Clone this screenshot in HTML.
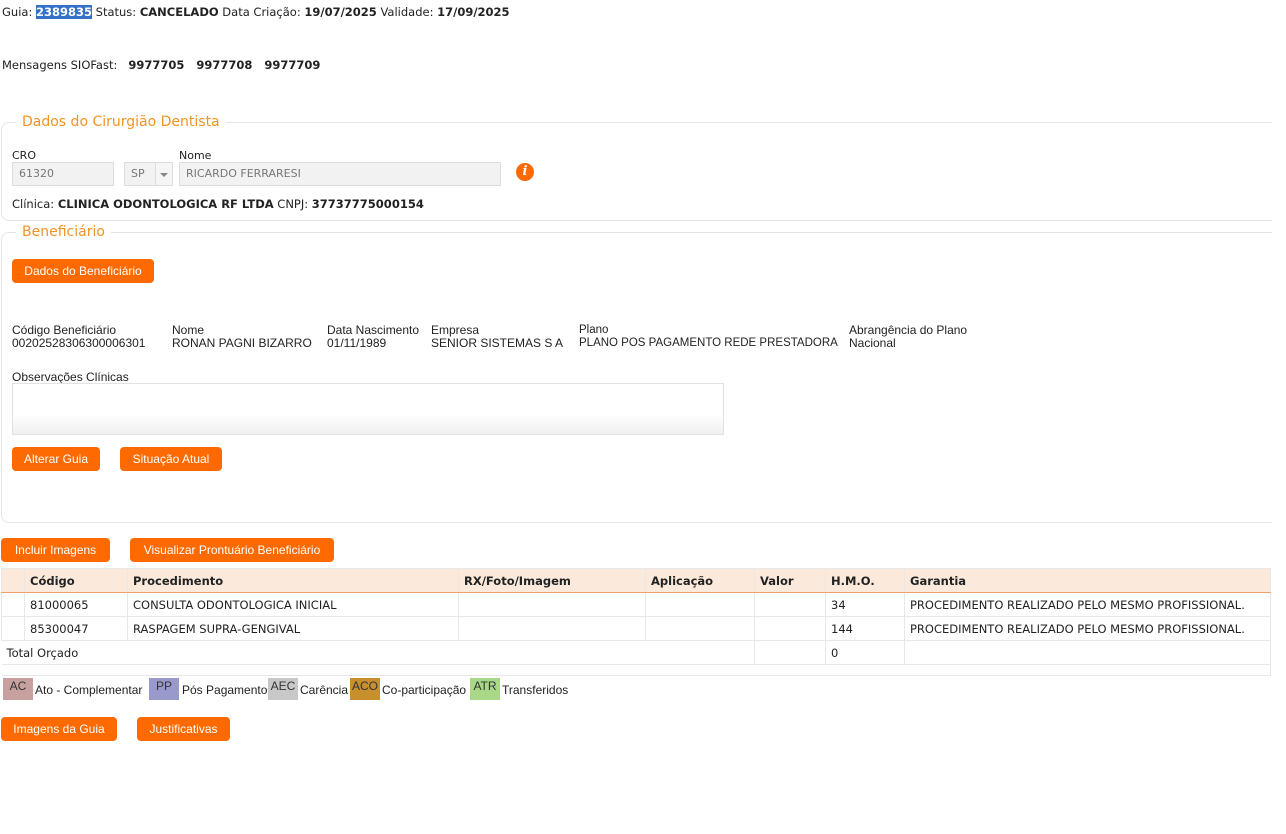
<!DOCTYPE html>
<html><head><meta charset="utf-8"><style>
body{margin:0;width:1286px;height:834px;background:#fff;font-family:"DejaVu Sans",Verdana,sans-serif;font-size:11.5px;color:#222;position:relative;overflow:hidden}
.a{position:absolute;white-space:nowrap}
.n{font-family:"Liberation Sans",Arial,sans-serif;font-size:12px}
.btn{position:absolute;background:#ff6a00;color:#fff;border-radius:4px;font-family:"Liberation Sans",Arial,sans-serif;font-size:12px;text-align:center;line-height:24px;height:24px}
fieldset{position:absolute;border:1px solid #e4e4e4;border-radius:8px;margin:0;padding:0;border-right:none;border-top-right-radius:0;border-bottom-right-radius:0}
legend{color:#f39325;font-size:14px;font-family:"DejaVu Sans",Verdana,sans-serif;padding:0 6px;margin-left:14px}
.inp{position:absolute;background:#f2f2f2;border:1px solid #ddd;color:#777;font-size:11px;line-height:22px;padding-left:6px;box-sizing:border-box;height:24px}
table{position:absolute;border-collapse:collapse;font-size:11.5px}
td,th{border:1px solid #e8e8e8;height:23px;padding:0 5px;text-align:left}
th{background:#fbeadb;border-bottom:1px solid #f0a070;font-weight:bold}
.lg{position:absolute;top:678px;height:22px;line-height:16px;text-align:center;font-family:"Liberation Sans",Arial,sans-serif;font-size:12px;color:#333}
.lt{position:absolute;top:683px;font-family:"Liberation Sans",Arial,sans-serif;font-size:12px;white-space:nowrap}
</style></head><body>
<div class="a" style="left:2px;top:5px">Guia: <span style="background:#3370c8;color:#fff;font-weight:bold">2389835</span> Status: <b>CANCELADO</b> Data Criação: <b>19/07/2025</b> Validade: <b>17/09/2025</b></div>
<div class="a" style="left:2px;top:58px">Mensagens SIOFast: &nbsp; <b>9977705 &nbsp; 9977708 &nbsp; 9977709</b></div>

<fieldset style="left:1px;top:114px;width:1270px;height:105px"><legend>Dados do Cirurgião Dentista</legend></fieldset>
<div class="a" style="left:12px;top:149px;font-size:11px">CRO</div>
<div class="a" style="left:179px;top:149px;font-size:11px">Nome</div>
<div class="inp" style="left:12px;top:162px;width:102px">61320</div>
<div class="inp" style="left:124px;top:162px;width:32px">SP</div>
<div class="inp" style="left:155px;top:162px;width:18px;background:#f5f5f5"><span style="position:absolute;left:4px;top:10px;border:4px solid transparent;border-top:4px solid #888;border-bottom:0"></span></div>
<div class="inp" style="left:179px;top:162px;width:322px">RICARDO FERRARESI</div>
<div class="a" style="left:516px;top:163px;width:18px;height:18px;border-radius:50%;background:#ff6a00;color:#fff;font:bold italic 13px 'DejaVu Serif',serif;text-align:center;line-height:18px">i</div>
<div class="a" style="left:12px;top:197px">Clínica: <b>CLINICA ODONTOLOGICA RF LTDA</b> CNPJ: <b>37737775000154</b></div>

<fieldset style="left:1px;top:224px;width:1270px;height:297px"><legend>Beneficiário</legend></fieldset>
<div class="btn" style="left:12px;top:259px;width:142px">Dados do Beneficiário</div>
<div class="a n" style="left:12px;top:324px;line-height:13px">Código Beneficiário<br>00202528306300006301</div>
<div class="a n" style="left:172px;top:324px;line-height:13px">Nome<br>RONAN PAGNI BIZARRO</div>
<div class="a n" style="left:327px;top:324px;line-height:13px">Data Nascimento<br>01/11/1989</div>
<div class="a n" style="left:431px;top:324px;line-height:13px">Empresa<br>SENIOR SISTEMAS S A</div>
<div class="a n" style="left:579px;top:324px;line-height:13px;font-size:11.5px">Plano<br>PLANO POS PAGAMENTO REDE PRESTADORA</div>
<div class="a n" style="left:849px;top:324px;line-height:13px">Abrangência do Plano<br>Nacional</div>
<div class="a n" style="left:12px;top:370px">Observações Clínicas</div>
<div class="a" style="left:12px;top:383px;width:710px;height:50px;border:1px solid #e2e2e2;background:linear-gradient(#fff,#fff 60%,#f0f0f0)"></div>
<div class="btn" style="left:12px;top:447px;width:88px">Alterar Guia</div>
<div class="btn" style="left:120px;top:447px;width:102px">Situação Atual</div>

<div class="btn" style="left:1px;top:538px;width:109px">Incluir Imagens</div>
<div class="btn" style="left:130px;top:538px;width:204px">Visualizar Prontuário Beneficiário</div>

<table style="left:1px;top:568px;width:1270px">
<tr><th style="width:12px"></th><th style="width:92px">Código</th><th style="width:320px">Procedimento</th><th style="width:176px">RX/Foto/Imagem</th><th style="width:98px">Aplicação</th><th style="width:60px">Valor</th><th style="width:68px">H.M.O.</th><th>Garantia</th></tr>
<tr><td></td><td>81000065</td><td>CONSULTA ODONTOLOGICA INICIAL</td><td></td><td></td><td></td><td>34</td><td>PROCEDIMENTO REALIZADO PELO MESMO PROFISSIONAL.</td></tr>
<tr><td></td><td>85300047</td><td>RASPAGEM SUPRA-GENGIVAL</td><td></td><td></td><td></td><td>144</td><td>PROCEDIMENTO REALIZADO PELO MESMO PROFISSIONAL.</td></tr>
<tr><td colspan="5" style="border-left:none">Total Orçado</td><td></td><td>0</td><td></td></tr>
<tr><td colspan="8" style="height:10px;border-left:none"></td></tr>
</table>

<div class="lg" style="left:3px;width:30px;background:#c8a0a0">AC</div><div class="lt" style="left:35px">Ato - Complementar</div>
<div class="lg" style="left:149px;width:30px;background:#9999cc">PP</div><div class="lt" style="left:182px">Pós Pagamento</div>
<div class="lg" style="left:268px;width:30px;background:#c8c8c8">AEC</div><div class="lt" style="left:300px">Carência</div>
<div class="lg" style="left:350px;width:30px;background:#c8902c">ACO</div><div class="lt" style="left:382px">Co-participação</div>
<div class="lg" style="left:470px;width:30px;background:#a8d888">ATR</div><div class="lt" style="left:502px">Transferidos</div>

<div class="btn" style="left:1px;top:717px;width:116px">Imagens da Guia</div>
<div class="btn" style="left:137px;top:717px;width:93px">Justificativas</div>
</body></html>
